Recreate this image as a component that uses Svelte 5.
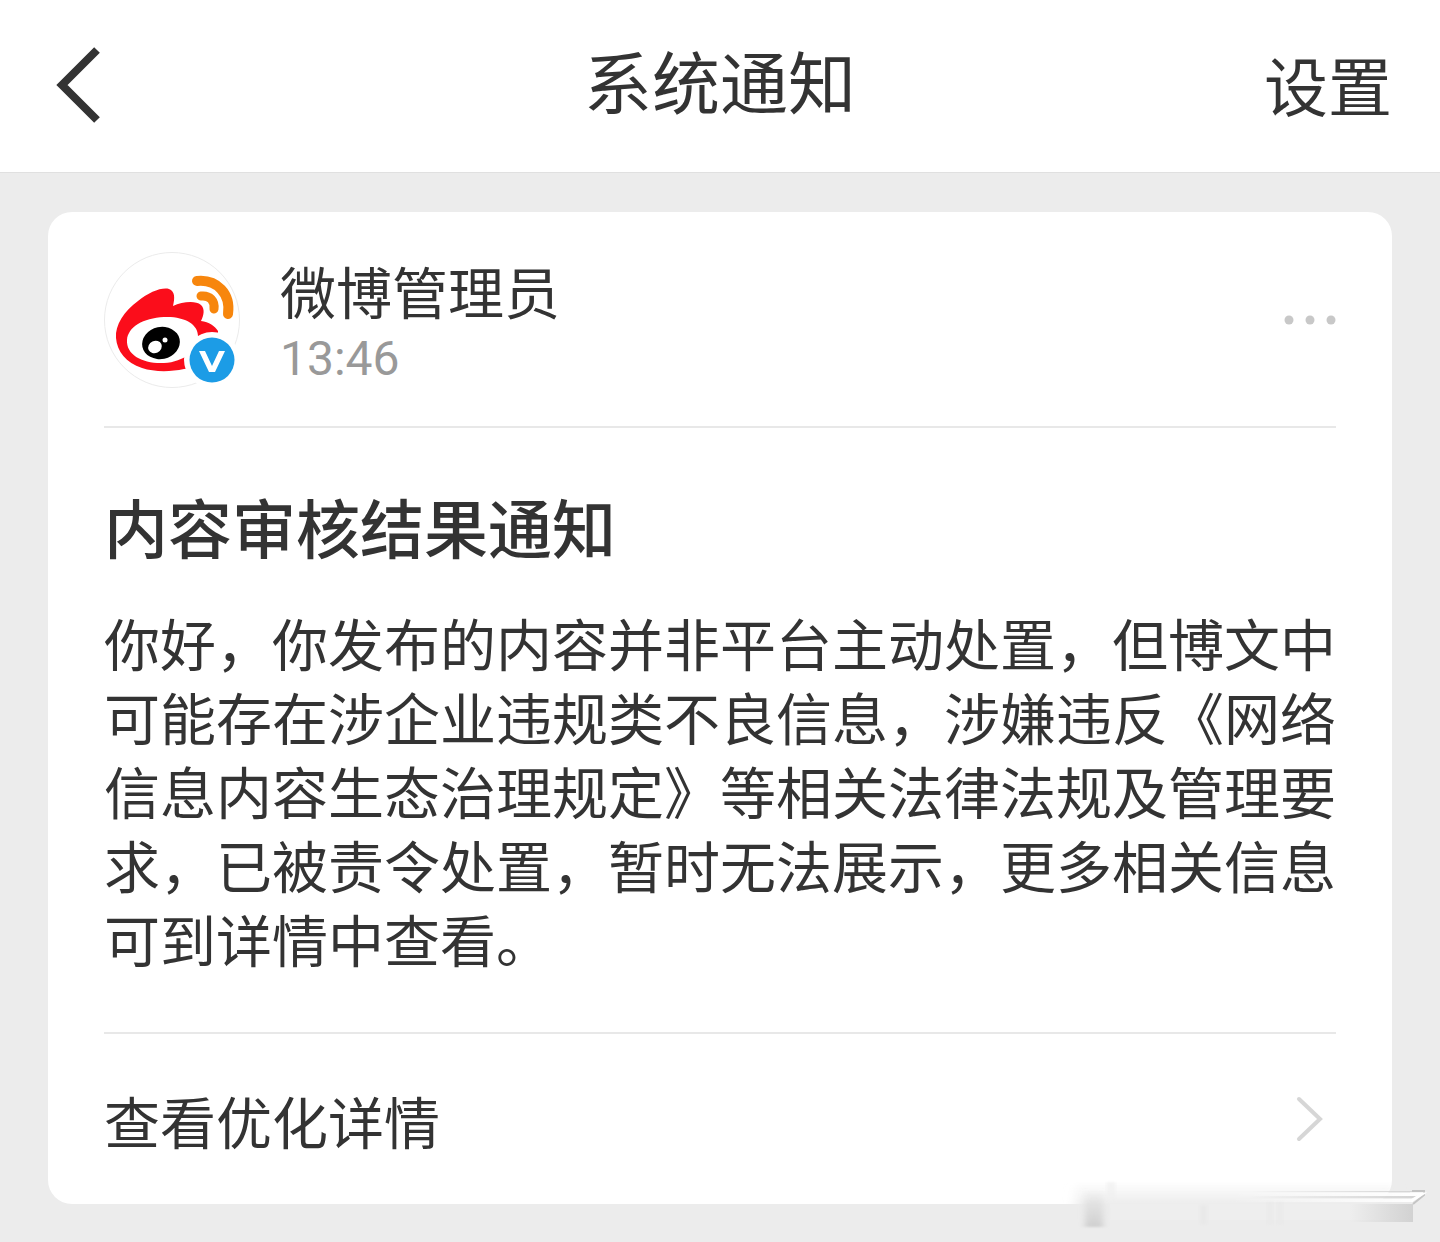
<script>
	const notice = {
		sender: '微博管理员',
		time: '13:46',
		title: '内容审核结果通知',
		text: '你好，你发布的内容并非平台主动处置，但博文中可能存在涉企业违规类不良信息，涉嫌违反《网络信息内容生态治理规定》等相关法律法规及管理要求，已被责令处置，暂时无法展示，更多相关信息可到详情中查看。',
		link: '查看优化详情'
	};
</script>

<div class="page">
	<header class="topbar">
		<button class="back" aria-label="返回">
			<svg width="46" height="78" viewBox="0 0 46 78">
				<path d="M41 3 L6 38 L41 73" fill="none" stroke="#333" stroke-width="8" />
			</svg>
		</button>
		<h1>系统通知</h1>
		<a class="settings" href="/settings">设置</a>
	</header>

	<main>
		<article class="card">
			<div class="sender">
				<div class="avatar">
					<svg width="136" height="136" viewBox="0 0 136 136">
						<circle cx="68" cy="68" r="67.500" fill="#fff" stroke="#ebebeb" />
						<path
							d="M12 86 C11 73 20 59 34 49 C45 40 58 35 65 37 C71 39 71 46 69 54 C78 50 91 48 97 53 C101 57 100 63 97 69 C105 70 111 74 114 79 L114 114 L80 117 C66 120 50 120 38 116 C22 111 13 99 12 86 Z"
							fill="#fb0d1b"
						/>
						<path
							d="M23 88 C24 75 39 66 60 65 C80 64 94 72 94 84 C95 98 80 110 60 111 C39 112 22 103 23 88 Z"
							fill="#fff"
						/>
						<ellipse cx="57" cy="91" rx="19" ry="16" transform="rotate(-12 57 91)" fill="#000" />
						<ellipse cx="51" cy="95" rx="7" ry="6" transform="rotate(-25 51 95)" fill="#fff" />
						<circle cx="61" cy="88" r="2.500" fill="#fff" />
						<path
							d="M93 29 C113 27 127 42 124 62"
							fill="none"
							stroke="#f7860d"
							stroke-width="10"
							stroke-linecap="round"
						/>
						<path
							d="M97 44 C106 43 111 49 110 57"
							fill="none"
							stroke="#f7860d"
							stroke-width="9"
							stroke-linecap="round"
						/>
						<circle cx="108" cy="108" r="28" fill="#fff" />
						<circle cx="108" cy="108" r="22.500" fill="#1c9ce6" />
						<path d="M95 99 H101 L108 114 L115 99 H121 L111 120 H105 Z" fill="#fff" />
					</svg>
				</div>
				<div class="who">
					<h2>{notice.sender}</h2>
					<time>{notice.time}</time>
				</div>
				<button class="more" aria-label="更多">
					<svg width="52" height="10" viewBox="0 0 52 10">
						<circle cx="5" cy="5" r="4.500" fill="#c8c8c8" />
						<circle cx="26" cy="5" r="4.500" fill="#c8c8c8" />
						<circle cx="47" cy="5" r="4.500" fill="#c8c8c8" />
					</svg>
				</button>
			</div>

			<div class="content">
				<h3>{notice.title}</h3>
				<p>{notice.text}</p>
			</div>

			<a class="detail" href="/detail">
				<span>{notice.link}</span>
				<svg width="28" height="46" viewBox="0 0 28 46">
					<path
						d="M3 3 L24 23 L3 43"
						fill="none"
						stroke="#d6d6d6"
						stroke-width="4"
						stroke-linecap="round"
					/>
				</svg>
			</a>
		</article>
	</main>

	<!-- faded stamp over the corner of the card -->
	<svg class="stamp" width="390" height="72" viewBox="0 0 390 72" aria-hidden="true">
		<defs>
			<linearGradient id="fade" x1="0" y1="0" x2="0" y2="1">
				<stop offset="0" stop-color="#ececec" stop-opacity="0" />
				<stop offset="1" stop-color="#ececec" />
			</linearGradient>
			<linearGradient id="smear" x1="0" y1="0" x2="0" y2="1">
				<stop offset="0" stop-color="#d0d0d0" stop-opacity="0" />
				<stop offset="1" stop-color="#d0d0d0" />
			</linearGradient>
			<linearGradient id="edge" x1="0" y1="0" x2="1" y2="0">
				<stop offset="0" stop-color="#d2d2d2" stop-opacity="0" />
				<stop offset="1" stop-color="#d2d2d2" />
			</linearGradient>
			<linearGradient id="line" x1="0" y1="0" x2="1" y2="0">
				<stop offset="0" stop-color="#fff" stop-opacity="0" />
				<stop offset="1" stop-color="#fff" />
			</linearGradient>
			<linearGradient id="shade" x1="0" y1="0" x2="1" y2="0">
				<stop offset="0" stop-color="#d4d4d4" stop-opacity="0" />
				<stop offset="1" stop-color="#d4d4d4" />
			</linearGradient>
			<filter id="soft" x="-50%" y="-50%" width="200%" height="200%">
				<feGaussianBlur stdDeviation="3 1" />
			</filter>
			<filter id="wide" x="-10%" y="-10%" width="120%" height="120%">
				<feGaussianBlur stdDeviation="6 0" />
			</filter>
		</defs>
		<rect x="26" y="12" width="318" height="24" fill="url(#fade)" filter="url(#wide)" />
		<rect x="60" y="35" width="280" height="16" fill="#f1f1f1" opacity="0.3" />
		<rect x="35" y="20" width="18" height="38" fill="url(#smear)" filter="url(#soft)" />
		<rect x="58" y="13" width="6" height="20" fill="#efefef" filter="url(#soft)" />
		<rect x="151" y="36" width="5" height="20" fill="#e6e6e6" filter="url(#soft)" />
		<rect x="218" y="32" width="4" height="24" fill="#e7e7e7" filter="url(#soft)" />
		<rect x="228" y="32" width="4" height="24" fill="#e7e7e7" filter="url(#soft)" />
		<rect x="300" y="35" width="63" height="18" fill="url(#edge)" />
		<path d="M200 22 H366 V23 H200 Z M200 27 H366 V29 H200 Z" fill="url(#shade)" />
		<path d="M180 24 H366 V27 H180 Z M180 30 H363 V33 H180 Z" fill="url(#line)" />
		<path d="M362 22 H374 V26 L363 35" fill="none" stroke="#c4c4c4" stroke-width="2" />
		<path d="M360 25 H372 L361 32" fill="none" stroke="#fff" stroke-width="3" />
	</svg>
</div>

<style>
	:global(body) {
		margin: 0;
		background: #ececec;
	}
	.page {
		position: relative;
		padding-bottom: 37px;
		background: #ececec;
		color: #333;
		font-family: Roboto, 'Noto Sans CJK SC', sans-serif;
	}
	h1,
	h2,
	h3,
	p {
		margin: 0;
		font-weight: 400;
	}
	button {
		padding: 0;
		border: none;
		background: none;
		cursor: pointer;
	}
	a {
		color: inherit;
		text-decoration: none;
	}
	svg {
		display: block;
	}

	.topbar {
		display: grid;
		grid-template-columns: 1fr auto 1fr;
		align-items: center;
		height: 173px;
		box-sizing: border-box;
		padding: 0 48px;
		border-bottom: 1px solid #e0e0e0;
		background: #fff;
	}
	.back {
		justify-self: start;
		padding-left: 8px;
	}
	.topbar h1 {
		font-size: 68px;
		line-height: 100px;
	}
	.settings {
		justify-self: end;
		padding-top: 8px;
		font-size: 64px;
		line-height: 92px;
	}

	main {
		padding: 39px 48px 0;
	}
	.card {
		padding: 0 56px;
		border-radius: 24px;
		background: #fff;
	}
	.sender {
		display: flex;
		align-items: center;
		padding: 40px 0 38px;
		border-bottom: 2px solid #e8e8e8;
	}
	.who {
		flex: 1;
		margin-left: 40px;
		padding-top: 6px;
	}
	.who h2 {
		font-size: 56px;
		line-height: 72px;
	}
	.who time {
		display: block;
		color: #999;
		font-size: 48px;
		line-height: 56px;
	}

	.content {
		padding: 64px 0 52px;
		border-bottom: 2px solid #e8e8e8;
	}
	.content h3 {
		margin-bottom: 38px;
		font-size: 64px;
		font-weight: 500;
		line-height: 80px;
	}
	.content p {
		font-size: 56px;
		line-height: 74px;
	}

	.detail {
		display: flex;
		align-items: center;
		justify-content: space-between;
		height: 170px;
		padding-right: 12px;
		font-size: 56px;
	}

	.stamp {
		position: absolute;
		right: 0;
		bottom: 0;
	}
</style>
